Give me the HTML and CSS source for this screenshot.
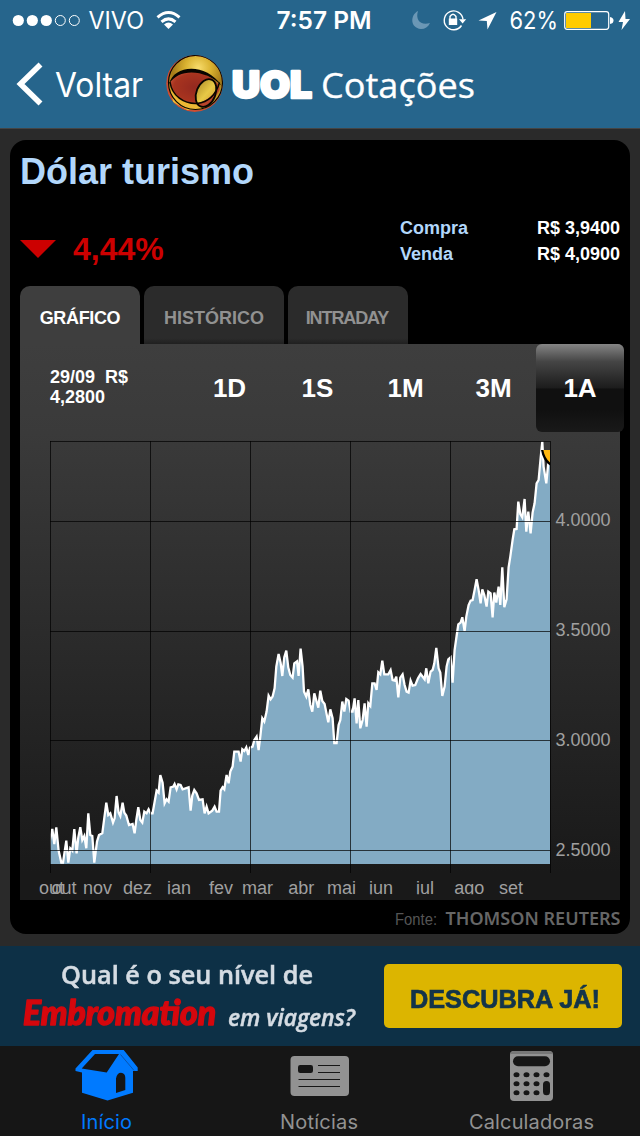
FILE: index.html
```html
<!DOCTYPE html>
<html lang="pt-BR">
<head>
<meta charset="utf-8">
<title>UOL Cotações</title>
<link rel="stylesheet" href="styles.css">
</head>
<body>
<div class="app">
<header class="header">
<svg class="status" width="640" height="40" viewBox="0 0 640 40">
<g fill="#fff"><circle cx="18.3" cy="20.5" r="5.6"/><circle cx="32.3" cy="20.5" r="5.6"/><circle cx="46.3" cy="20.5" r="5.6"/></g>
<g fill="none" stroke="#fff" stroke-width="1"><circle cx="60.3" cy="20.5" r="5"/><circle cx="74.3" cy="20.5" r="5"/></g>
<text class="st" x="88.500" y="29" textLength="55.500" lengthAdjust="spacingAndGlyphs">VIVO</text>
<path d="M168.500 29l-4.500-4.600q4.500-3.600 9 0z" fill="#fff"/>
<g fill="none" stroke="#fff" stroke-width="3"><path d="M157.500 17.300q11-9.600 22 0"/><path d="M161.500 21.800q7-5.800 14 0"/></g>
<text class="st st-time" x="276.500" y="29" textLength="95" lengthAdjust="spacingAndGlyphs">7:57 PM</text>
<path d="M418 11c-8 4-8 17 3 18 4 0 7-2 9-6-9 3-15-3-12-12z" fill="#6b97b5"/>
<g fill="none" stroke="#fff" stroke-width="1.400"><path d="M461.500 25.500a9.400 9.400 0 1 1 1.500-6"/><path d="M450 19v-2.500q3-4.500 6 0V19"/></g>
<path d="M448.800 18.500h8.400V25h-8.400zM459 19.300h7.200l-3.600 4.200z" fill="#fff"/>
<path d="M496.500 12L478.500 20.500l8.300 0.600 0.700 8.400z" fill="#fff"/>
<text class="st" x="509.500" y="29" textLength="48.500" lengthAdjust="spacingAndGlyphs">62%</text>
<rect x="564.700" y="11.700" width="44" height="17.600" rx="2.500" fill="none" stroke="#fff" stroke-width="1.200"/>
<path d="M566 13h25v15h-25z" fill="#ffcc00"/>
<path d="M610 17q3.500.5 3.500 3.500t-3.500 3.500z" fill="#fff"/>
<path d="M625 11l-6.500 11h4.500l-1.500 8 8.500-11h-4.500z" fill="#fff"/>
</svg>
<svg class="nav" width="640" height="88" viewBox="0 40 640 88">
<defs>
<radialGradient id="gold" cx=".55" cy=".22" r=".8"><stop offset="0" stop-color="#f8dc6c"/><stop offset=".3" stop-color="#d9b230"/><stop offset=".6" stop-color="#a57a18"/><stop offset="1" stop-color="#f2bd32"/></radialGradient>
<radialGradient id="red" cx=".5" cy=".5" r=".6"><stop offset="0" stop-color="#94291f"/><stop offset=".7" stop-color="#a8341f"/><stop offset="1" stop-color="#cf573c"/></radialGradient>
<linearGradient id="gold2" x1="0" y1="0" x2="1" y2="1"><stop offset="0" stop-color="#8d6715"/><stop offset=".5" stop-color="#e8c946"/><stop offset="1" stop-color="#c17a20"/></linearGradient>
<clipPath id="ball"><circle cx="194.600" cy="83.500" r="28.500"/></clipPath>
<clipPath id="ring"><ellipse cx="206" cy="93" rx="9.500" ry="14.500" transform="rotate(22 206 93)"/></clipPath>
</defs>
<path d="M40.500 64.500L20.500 84l20 19.500" fill="none" stroke="#fff" stroke-width="5.600"/>
<text class="back" x="55" y="96.500" textLength="88" lengthAdjust="spacingAndGlyphs">Voltar</text>
<g clip-path="url(#ball)">
<circle cx="194.600" cy="83.500" r="28.500" fill="#cc4d32"/>
<circle cx="195.500" cy="83" r="27" fill="url(#gold)"/>
<path d="M170 82Q178 71 192 71 206 72 216 82 221 86 219 91 214 101 204 103 190 105 179 98 171 91 170 82z" fill="url(#red)"/>
<path d="M171 90q6 12 21 14 9 1 15-2l-10 8h-10l-14-8z" fill="#ecb935"/>
<g clip-path="url(#ring)"><path d="M190 75h32v38h-32z" fill="url(#gold2)"/><path d="M192 104q16-1 26-16v24h-26z" fill="#b9442b"/></g>
<g fill="none" stroke="#090600"><ellipse cx="206" cy="93" rx="9.500" ry="14.500" transform="rotate(22 206 93)" stroke-width="1.800"/><path d="M170 82c2 14 14 22 27 21.500q17-2 22.500-21" stroke-width="1.500"/><circle cx="195.500" cy="82.500" r="27" stroke-width="1.200"/></g>
<path d="M169 84C174 65 205 62 222 86 205 69 179 68 169 84z" fill="#080500"/>
</g>
<text class="uol" x="232" y="97.500" textLength="80" lengthAdjust="spacingAndGlyphs">UOL</text>
<text class="quotes" x="321" y="97.500" textLength="154" lengthAdjust="spacingAndGlyphs">Cotações</text>
</svg>
</header>
<main class="main">
<section class="card">
<h1 class="title">Dólar turismo</h1>
<div class="quote">
<div class="change"><svg class="down" width="36" height="18" viewBox="0 0 36 18"><path d="M0 0h36L18 18z" fill="#cc0000"/></svg><span>4,44%</span></div>
<dl class="prices"><dt>Compra</dt><dd>R$ 3,9400</dd><dt>Venda</dt><dd>R$ 4,0900</dd></dl>
</div>
<nav class="tabs"><span class="tab tab-on">GRÁFICO</span><span class="tab tab-mid">HISTÓRICO</span><span class="tab tab-last">INTRADAY</span></nav>
<div class="panel">
<div class="ranges">
<div class="last">29/09&nbsp; R$<br>4,2800</div>
<span class="range">1D</span><span class="range">1S</span><span class="range">1M</span><span class="range">3M</span><span class="range range-on">1A</span>
</div>
<svg class="chart" width="600" height="468" viewBox="20 432 600 468">
<defs><clipPath id="plot"><path d="M50 441h500v423H50z"/></clipPath><clipPath id="months"><path d="M20 874h600v20.200H20z"/></clipPath></defs>
<g clip-path="url(#plot)">
<path fill="#83abc4" stroke="#fff" stroke-width="2.300" stroke-linejoin="miter" d="M46 880L50 840 52.300 829 54.300 844 56.300 827.300 58.600 850.600 61.300 862.600 63 862.600 66.300 840.600 68.300 862.600 70.300 848.300 72.300 850.600 74.300 829 76.600 853.300 78.300 837.300 80.300 827.300 82.300 840 84.300 836 86.300 848.300 88.300 813.300 90.300 835 92.300 836 94.300 862.600 97 841.600 99 835 102.300 833.300 106.300 802.600 108.300 815 110.300 813.300 113 822.600 114.600 818.300 116.600 796 118.600 812.600 120.300 816 122.600 802.600 124.300 812.600 126.300 815.600 129 825 132.600 824 134.600 833.300 136.300 820 138.300 807.300 140.300 820 142.300 822.600 144.300 811.600 146.600 813.300 148.600 809.300 150.600 813.300 152.600 813.300 156.600 790.600 158.600 792.600 160.300 775 162.600 782.600 164.600 803.300 166.600 799.300 168.600 801.600 170.600 787.300 173.300 786.600 174.600 784 176.600 789.300 178.300 784.300 180.600 785 182.600 789.300 188.600 787.300 190.600 810.600 192.300 795.600 194.300 790 196.600 793.300 199 800 202.600 799.300 204.600 813.300 206.600 806.600 208.600 813.300 212.300 810.600 214.600 806.600 216.600 811.600 219 811.600 220.600 790.600 222.600 787.300 224.300 789.300 226.600 775 228.600 783.300 230.300 771.600 232.600 766.600 234.300 751.600 238.600 751.600 240.600 761.600 242.300 749.300 244.300 751 246.300 747.300 248.300 755 250 747.600 252.600 746.600 254.300 740 256.600 736.600 258.600 750 260.300 736.600 262.300 718.300 264.300 721.600 266.600 711.600 268.600 695.600 270.600 699.300 272.600 696.600 274.600 688.300 276.300 666.600 278.600 654 280.600 662.600 282.300 676 284.300 657.300 286.300 650.600 288.300 667.600 290.300 675 292.600 677.600 294.300 663.300 297 661.300 298.600 676 300.600 648.600 302.600 666.600 304 691.600 306.300 696.600 308.300 689.300 310.300 705 312.300 711.600 314.300 693.300 318.300 707.600 320.300 690.600 322.300 701 324.600 704 326.600 714 328.300 722.300 330.300 709.300 332.600 718.300 334.300 743 336.600 743 338.600 725 340.300 720 342.300 701.600 344.300 711.600 346.300 699 348.600 700.600 350.600 711.600 352.600 711.600 354.600 698.300 356.600 723.300 358.300 700 360.300 728.300 362.600 720 364.600 703.300 366.600 726.600 368.300 703.300 370.300 706 372.300 683.300 374.600 683.300 376.600 690 378.300 672.300 380.300 674.300 382.300 660.600 384.300 674.300 388.300 674.300 390.600 670 392.600 680 394.600 680.600 396.300 676.600 398.300 697.300 400.300 677.600 402.600 674.300 404.600 685 406.600 691.600 408.600 692.600 410.600 680.600 412.600 685.600 415.300 685 418 678.300 420.600 674 424.600 679.300 426.300 668.300 428.300 683.300 430.600 671.600 432.600 670 434.300 663.300 436.300 648 438.600 668.300 440.300 672.600 442.300 696 444.600 686.600 446.600 666.600 448.300 659.300 450.600 657.300 452.600 682.600 454.600 650 456.600 636 458.300 624.300 460.600 622.600 462.300 617.300 464.600 631 466.300 616.600 468.600 605 470.600 600.600 472.600 600 474.600 590 476.600 579.300 478.600 590 480.600 603.300 482.300 589.300 484.300 595 486.600 606.600 488.300 591.600 490.600 593.300 492.600 617.300 494.300 592.600 496.300 602.600 498.600 586.600 500.300 605 502.300 567.300 504.300 607.300 506.600 599.300 508.600 567.300 510.300 556.600 512.600 540 514.300 529.300 516.600 529 518.300 501.600 520.300 514 522.300 517.300 524.600 499 526.300 531.600 528.300 511.600 530.600 533.300 532.600 512.600 534.600 503.300 536.600 483.300 538.600 480 540.600 458.300 542.300 441.600 543.600 466.600 546.300 483.300 548.600 460 552 460V880z"/>
<path d="M541 450H551v16q-8-4-10-16z"/><path d="M543.300 450H550v12.500q-5-4-6.700-12.500z" fill="#ffb710"/>
</g>
<g fill="#000" fill-opacity=".7"><path d="M50 441h500v1H50zM50 521h500v1H50zM50 631h500v1H50zM50 740h500v1H50zM50 850h500v1H50z"/><path d="M50 441h1v432h-1zM150 441h1v432h-1zM250 441h1v432h-1zM350 441h1v432h-1zM450 441h1v432h-1zM550 441h1v432h-1z"/></g>
<g class="axis"><text x="555.500" y="526">4.0000</text><text x="555.500" y="636">3.5000</text><text x="555.500" y="746">3.0000</text><text x="555.500" y="856">2.5000</text></g>
<g class="axis" clip-path="url(#months)"><text x="39" y="894">out</text><text x="51.500" y="894">out</text><text x="83" y="894">nov</text><text x="123" y="894">dez</text><text x="167" y="894">jan</text><text x="209" y="894">fev</text><text x="242" y="894">mar</text><text x="288.200" y="894">abr</text><text x="327" y="894">mai</text><text x="369" y="894">jun</text><text x="416" y="894">jul</text><text x="454.200" y="894">ago</text><text x="499" y="894">set</text></g>
</svg>
</div>
<svg class="source" width="600" height="34" viewBox="20 900 600 34">
<text class="src" x="395" y="924.500" textLength="42" lengthAdjust="spacingAndGlyphs">Fonte:</text>
<text class="src reuters" x="445.500" y="924.500" textLength="175" lengthAdjust="spacingAndGlyphs">THOMSON REUTERS</text>
</svg>
</section>
</main>
<aside class="banner">
<svg width="640" height="100" viewBox="0 946 640 100">
<g class="soft">
<text class="ask" x="61" y="984" textLength="252" lengthAdjust="spacingAndGlyphs">Qual é o seu nível de</text>
<text class="brush" x="23" y="1025" textLength="193" lengthAdjust="spacingAndGlyphs">Embromation</text>
<text class="trip" x="228" y="1026" textLength="127" lengthAdjust="spacingAndGlyphs">em viagens?</text>
<rect x="384" y="964" width="238" height="64" rx="5" fill="#dcb500"/>
<text class="cta" x="410" y="1008" textLength="190" lengthAdjust="spacingAndGlyphs">DESCUBRA JÁ!</text>
</g>
</svg>
</aside>
<footer class="tabbar">
<svg width="640" height="90" viewBox="0 1046 640 90">
<path d="M92.500 1050h31.200l14 17.500v3.500h-4.700v21.700L107.500 1100.500l-25.500-7.700V1072.500l-6.500-1.600v-2.500z" fill="#007aff"/>
<path d="M95 1054h24L106.700 1072.600 81.700 1068.600zM116 1093v-14.500q1-5.700 5-5.700 4.300.5 4.300 5V1090z" fill="#161616"/>
<path d="M120.500 1054.500l13.500 16" stroke="#0c448c" stroke-width=".7"/>
<rect x="290.500" y="1056" width="58.500" height="40" rx="4" fill="#929292"/>
<rect x="298" y="1065" width="15" height="8" rx="2.200" fill="#161616"/>
<path d="M318 1065.500h22M318 1072.500h22M298.500 1079.500h41.500M298.500 1086.500h41.500" stroke="#161616" stroke-width="1"/>
<rect x="510" y="1051" width="43" height="50" rx="4" fill="#929292"/><path d="M510 1054q.5-3 4-3h35q3.500 0 4 3z" fill="#777"/>
<rect x="513" y="1056.300" width="37" height="10" rx="5" fill="#161616"/>
<g fill="#161616"><ellipse cx="516.500" cy="1074.700" rx="3" ry="2.500"/><ellipse cx="526.500" cy="1074.700" rx="3" ry="2.500"/><ellipse cx="536.500" cy="1074.700" rx="3" ry="2.500"/><ellipse cx="546.500" cy="1074.700" rx="3" ry="2.500"/><ellipse cx="516.500" cy="1083.700" rx="3" ry="2.500"/><ellipse cx="526.500" cy="1083.700" rx="3" ry="2.500"/><ellipse cx="536.500" cy="1083.700" rx="3" ry="2.500"/><ellipse cx="516.500" cy="1092.700" rx="3" ry="2.500"/><ellipse cx="526.500" cy="1092.700" rx="3" ry="2.500"/><ellipse cx="536.500" cy="1092.700" rx="3" ry="2.500"/><rect x="543" y="1081" width="7" height="14.300" rx="3.500"/></g>
<text class="item item-on" x="81" y="1129" textLength="51">Início</text>
<text class="item" x="280" y="1129" textLength="78">Notícias</text>
<text class="item" x="469" y="1129" textLength="125">Calculadoras</text>
</svg>
</footer>
</div>
</body>
</html>
```
FILE: styles.css
```css
* { box-sizing: border-box; }
body { margin: 0; background: #2a2a2a; font-family: "Liberation Sans", Arial, sans-serif; }
svg { display: block; }
.app { width: 640px; height: 1136px; display: flex; flex-direction: column; overflow: hidden; }
.header { height: 128px; background: #26658c; }
.st { font: 400 24px Inter, sans-serif; fill: #fff; }
.st-time { font-weight: 600; }
.back { font: 400 34px Inter, sans-serif; fill: #fff; }
.uol { font: 900 37px Inter, sans-serif; fill: #fff; stroke: #fff; stroke-width: 2.5px; stroke-linejoin: round; }
.quotes { font: 400 34px "Open Sans", sans-serif; fill: #fff; stroke: #fff; stroke-width: .3px; }
.main { height: 818px; padding: 12px 10px 0; border-top: 1px solid #444; background: #2a2a2a; }
.card { height: 794px; margin-top: -1px; padding: 12px 10px 0; border-radius: 16px; background: #000; }
.title { margin: 0; font-size: 36px; line-height: 40px; color: #b2d7fb; }
.quote { display: flex; justify-content: space-between; align-items: flex-end; height: 52px; margin-top: 23px; }
.change { display: flex; align-items: center; gap: 17px; font-weight: bold; font-size: 32px; line-height: 36px; color: #cc0000; }
.prices { display: grid; grid-template-columns: 1fr auto; width: 220px; margin: 0; font-weight: bold; font-size: 18px; line-height: 26px; }
.prices dt { color: #b2d7fb; }
.prices dd { margin: 0; color: #fff; }
.tabs { display: flex; gap: 4px; height: 58px; margin-top: 19px; }
.tab { width: 120px; padding-top: 6px; border-radius: 10px 10px 0 0; text-align: center; font-weight: bold; font-size: 18px; line-height: 52px; color: #919191; background: linear-gradient(#2b2b2b 90%, #202020); }
.tab-on { color: #fff; background: #3e3e3e; letter-spacing: -0.35px; }
.tab-mid { width: 140px; }
.tab-last { letter-spacing: -1.1px; padding-right: 2px; }
.panel { width: 600px; height: 556px; background: linear-gradient(#3e3e3e, #3a3a3a 16%, #191919 95%); }
.ranges { display: flex; width: 604px; height: 88px; padding-left: 30px; color: #fff; font-weight: bold; }
.last { width: 134px; padding-top: 23px; font-size: 18px; line-height: 20px; }
.range { width: 88px; padding-left: 3px; text-align: center; font-size: 26px; line-height: 88px; }
.range-on { padding-left: 0; border-radius: 6px; background: linear-gradient(#858585, #454545 20%, #1c1c1c 50%, #101010 51%, #101010 75%, #191919); }
.axis { font-size: 18px; fill: #a0a0a0; }
.src { font-size: 17px; fill: #555; }
.reuters { font-family: "Noto Sans", sans-serif; font-weight: 600; fill: #666; }
.banner { height: 100px; background: #0d3046; }
.soft { filter: blur(.5px); }
.ask { font: 600 25px "Open Sans", sans-serif; fill: #d5dce3; stroke: #d5dce3; stroke-width: .5px; }
.brush { font: italic 900 34px Lato, sans-serif; fill: #d5070d; stroke: #d5070d; stroke-width: 1.4px; stroke-linejoin: round; }
.trip { font: italic 600 24px "Open Sans", sans-serif; fill: #d5dce3; stroke: #d5dce3; stroke-width: .5px; }
.cta { font-weight: bold; font-size: 25px; fill: #13344a; stroke: #13344a; stroke-width: .7px; }
.tabbar { height: 90px; background: #161616; }
.item { font: 400 20px Inter, sans-serif; fill: #929292; }
.item-on { fill: #007aff; }
```
